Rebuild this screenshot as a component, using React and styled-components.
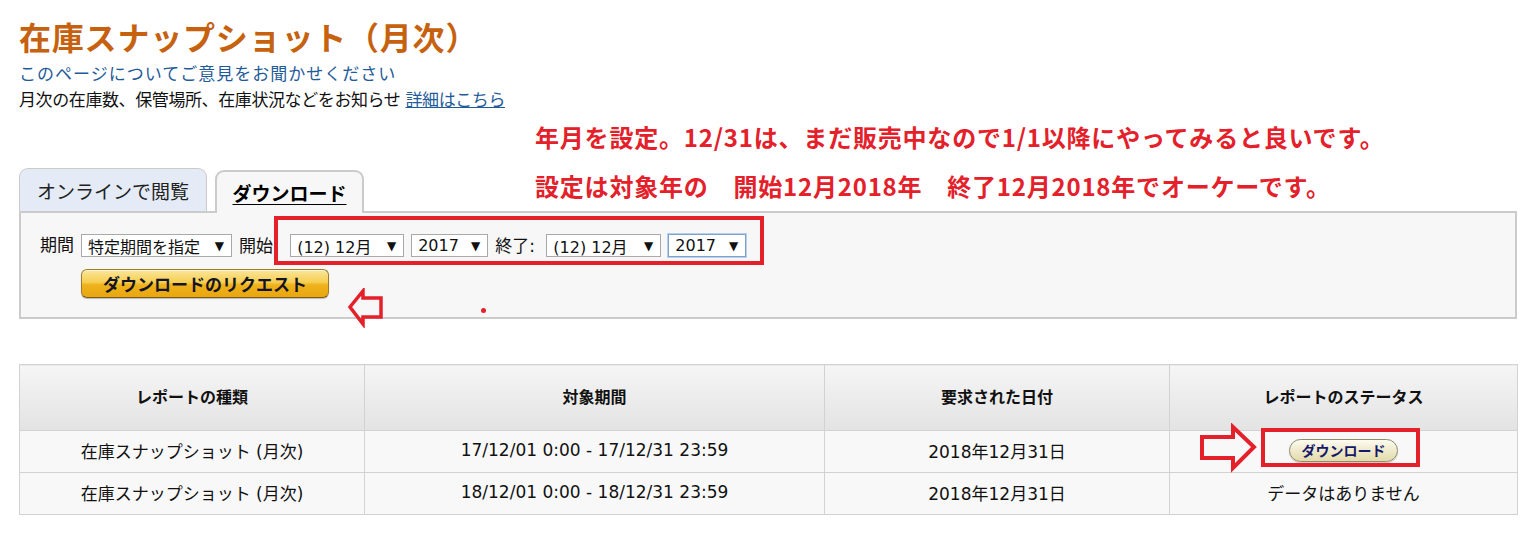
import styled, { createGlobalStyle } from 'styled-components'

const GlobalStyle = createGlobalStyle`
  body {
    margin: 0;
    background: #ffffff;
    font-family: 'DejaVu Sans', 'Noto Sans CJK JP', sans-serif;
    color: #111111;
  }
`

const SELECTS = [
  { value: '特定期間を指定', width: 151 },
  { label: '開始: ', value: '(12) 12月', width: 114 },
  { value: '2017', width: 77 },
  { label: '終了: ', value: '(12) 12月', width: 115 },
  { value: '2017', width: 78, focused: true },
]

const ROWS = [
  {
    type: '在庫スナップショット (月次)',
    period: '17/12/01 0:00 - 17/12/31 23:59',
    requested: '2018年12月31日',
    ready: true,
  },
  {
    type: '在庫スナップショット (月次)',
    period: '18/12/01 0:00 - 18/12/31 23:59',
    requested: '2018年12月31日',
    ready: false,
  },
]

export default function App() {
  return (
    <Root>
      <GlobalStyle />
      <Page>
        <Title>在庫スナップショット（月次）</Title>
        <FeedbackLink href="#">このページについてご意見をお聞かせください</FeedbackLink>
        <Desc>
          月次の在庫数、保管場所、在庫状況などをお知らせ <DetailLink href="#">詳細はこちら</DetailLink>
        </Desc>

        <TabBar>
          <Tab $w={188}>オンラインで閲覧</Tab>
          <Tab $w={149} $active>
            ダウンロード
          </Tab>
        </TabBar>
        <Panel>
          <FieldLabel>期間</FieldLabel>
          <FormColumn>
            <ControlRow>
              {SELECTS.map((s, i) => (
                <Field key={i}>
                  {s.label && <FieldLabel>{s.label}</FieldLabel>}
                  <FakeSelect $w={s.width} $focused={s.focused}>
                    <span>{s.value}</span>
                    <Caret>▼</Caret>
                  </FakeSelect>
                </Field>
              ))}
            </ControlRow>
            <RequestButton>ダウンロードのリクエスト</RequestButton>
          </FormColumn>
        </Panel>

        <ReportTable>
          <colgroup>
            <col style={{ width: 345 }} />
            <col style={{ width: 460 }} />
            <col style={{ width: 345 }} />
            <col style={{ width: 348 }} />
          </colgroup>
          <thead>
            <tr>
              <Th>レポートの種類</Th>
              <Th>対象期間</Th>
              <Th>要求された日付</Th>
              <Th>レポートのステータス</Th>
            </tr>
          </thead>
          <tbody>
            {ROWS.map((r, i) => (
              <tr key={i}>
                <Td>{r.type}</Td>
                <Td>{r.period}</Td>
                <Td>{r.requested}</Td>
                <Td>
                  {r.ready ? <SmallButton>ダウンロード</SmallButton> : 'データはありません'}
                </Td>
              </tr>
            ))}
          </tbody>
        </ReportTable>
      </Page>

      {/* red hand-drawn annotations over the screenshot */}
      <Note $top={122}>年月を設定。12/31は、まだ販売中なので1/1以降にやってみると良いです。</Note>
      <Note $top={171}>設定は対象年の　開始12月2018年　終了12月2018年でオーケーです。</Note>
      <RedBox $x={274} $y={216} $w={490} $h={49} />
      <RedBox $x={1261} $y={428} $w={159} $h={39} />
      <Mark $x={347} $y={288} width="38" height="40" viewBox="0 0 38 40">
        <path d="M3 19 L16 3 L16 10 L34 10 L34 29 L16 29 L16 36 Z" fill="none" stroke="#e4202a" strokeWidth="3.5" strokeLinejoin="miter" />
      </Mark>
      <Mark $x={1198} $y={423} width="62" height="50" viewBox="0 0 62 50">
        <path d="M4 14 L35 14 L35 4 L56 24 L35 45 L35 35 L4 35 Z" fill="none" stroke="#e4202a" strokeWidth="4" strokeLinejoin="miter" />
      </Mark>
      <Dot />
    </Root>
  )
}

const Root = styled.div`
  position: relative;
  width: 1540px;
  height: 534px;
  overflow: hidden;
`

const Page = styled.div`
  width: 1498px;
  margin-left: 19px;
  padding-top: 16px;
`

const Title = styled.h1`
  margin: 0;
  font-family: 'Noto Sans CJK JP', sans-serif;
  font-size: 32px;
  line-height: 40px;
  font-weight: 700;
  letter-spacing: 0.8px;
  color: #c6620f;
`

const FeedbackLink = styled.a`
  display: block;
  margin-top: 5px;
  font-size: 17px;
  line-height: 26px;
  letter-spacing: 1px;
  color: #1f5b99;
  text-decoration: none;
`

const Desc = styled.div`
  font-size: 17px;
  line-height: 26px;
  letter-spacing: -0.4px;
  color: #111111;
`

const DetailLink = styled.a`
  color: #1f5b99;
  text-decoration: underline;
`

const TabBar = styled.div`
  display: flex;
  align-items: flex-end;
  gap: 8px;
  margin-top: 55px;
  height: 43px;
`

const Tab = styled.div`
  position: relative;
  z-index: 1;
  box-sizing: border-box;
  width: ${(p) => p.$w}px;
  height: 43px;
  display: flex;
  align-items: center;
  justify-content: center;
  font-size: 19px;
  border-radius: 9px 9px 0 0;
  border: ${(p) => (p.$active ? '2px' : '1px')} solid #cbcbcb;
  border-bottom: none;
  background: ${(p) => (p.$active ? '#f7f7f7' : '#e4ebf6')};
  font-weight: ${(p) => (p.$active ? 700 : 400)};
  text-decoration: ${(p) => (p.$active ? 'underline' : 'none')};
  text-underline-offset: 3px;
  color: ${(p) => (p.$active ? '#000000' : '#222222')};
  margin-bottom: ${(p) => (p.$active ? '-2px' : '0')};
`

const Panel = styled.div`
  box-sizing: border-box;
  height: 108px;
  display: flex;
  gap: 7px;
  padding: 21px 19px 19px;
  border: 2px solid #cbcbcb;
  background: #f7f7f7;
`

const FormColumn = styled.div`
  display: flex;
  flex-direction: column;
  align-items: flex-start;
  gap: 12px;
`

const ControlRow = styled.div`
  display: flex;
  align-items: center;
  gap: 7px;
`

const Field = styled.div`
  display: flex;
  align-items: center;
  gap: 6px;
`

const FieldLabel = styled.span`
  font-size: 17px;
  line-height: 22px;
  white-space: pre;
  color: #111111;
`

const FakeSelect = styled.div`
  box-sizing: border-box;
  width: ${(p) => p.$w}px;
  height: 23px;
  display: flex;
  align-items: center;
  justify-content: space-between;
  padding: 0 7px 0 6px;
  font-size: 16px;
  color: #111111;
  background: #ffffff;
  border: 1px solid ${(p) => (p.$focused ? '#7da2ce' : '#a9a9a9')};
  box-shadow: ${(p) => (p.$focused ? '0 0 0 1px #b9cfe9' : 'none')};
`

const Caret = styled.span`
  font-size: 12px;
  color: #111111;
`

const RequestButton = styled.button`
  box-sizing: border-box;
  width: 248px;
  height: 30px;
  border-radius: 6px;
  border: 1px solid #9d7a2a;
  border-bottom-color: #7a5c16;
  background: linear-gradient(#fae59a 0%, #f6cf52 45%, #eeb21c 55%, #e9a60f 100%);
  box-shadow: inset 0 1px 0 rgba(255, 255, 255, 0.6), 0 1px 1px rgba(0, 0, 0, 0.25);
  font-family: 'Noto Sans CJK JP', sans-serif;
  font-size: 17px;
  font-weight: 700;
  color: #141425;
  padding: 0;
`

const ReportTable = styled.table`
  margin-top: 45px;
  width: 1498px;
  table-layout: fixed;
  border-collapse: collapse;
  font-size: 17px;
`

const Th = styled.th`
  height: 62px;
  padding: 0 0 3px;
  border: 1px solid #d2d2d2;
  background: linear-gradient(#f5f5f5, #e3e3e3);
  font-family: 'Noto Sans CJK JP', sans-serif;
  font-size: 16px;
  font-weight: 700;
  color: #111111;
  text-align: center;
`

const Td = styled.td`
  height: 38px;
  padding: 0 0 3px;
  border: 1px solid #d2d2d2;
  background: #f8f8f8;
  text-align: center;
  color: #111111;
`

const SmallButton = styled.button`
  box-sizing: border-box;
  width: 109px;
  height: 23px;
  border-radius: 12px;
  border: 1px solid #8f8c6b;
  background: linear-gradient(#fdfcf0, #efeacb 50%, #e2dbaa);
  box-shadow: 0 1px 1px rgba(0, 0, 0, 0.2);
  font-family: 'Noto Sans CJK JP', sans-serif;
  font-size: 14px;
  font-weight: 700;
  color: #15186a;
  padding: 0;
`

const Note = styled.div`
  position: absolute;
  left: 535px;
  top: ${(p) => p.$top}px;
  font-family: 'Noto Sans CJK JP', sans-serif;
  font-size: 24px;
  line-height: 30px;
  font-weight: 700;
  letter-spacing: 0.8px;
  color: #e4202a;
  white-space: nowrap;
`

const RedBox = styled.div`
  position: absolute;
  left: ${(p) => p.$x}px;
  top: ${(p) => p.$y}px;
  width: ${(p) => p.$w}px;
  height: ${(p) => p.$h}px;
  box-sizing: border-box;
  border: 4px solid #e4202a;
`

const Mark = styled.svg`
  position: absolute;
  left: ${(p) => p.$x}px;
  top: ${(p) => p.$y}px;
`

const Dot = styled.div`
  position: absolute;
  left: 481px;
  top: 308px;
  width: 5px;
  height: 5px;
  border-radius: 50%;
  background: #e4202a;
`
